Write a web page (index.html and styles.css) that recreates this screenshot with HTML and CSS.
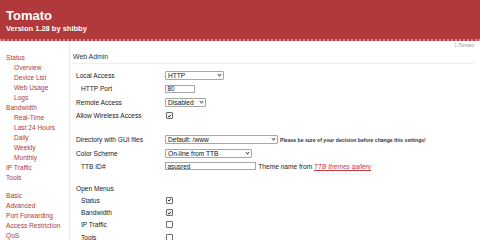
FILE: index.html
```html
<!DOCTYPE html>
<html>
<head>
<meta charset="utf-8">
<link rel="stylesheet" href="styles.css">
</head>
<body>
<header class="hdr">
  <div class="title">Tomato</div>
  <div class="version">Version 1.28 by shibby</div>
</header>
<div class="main">
  <nav class="side">
    <a class="top">Status</a>
    <a class="sub">Overview</a>
    <a class="sub">Device List</a>
    <a class="sub">Web Usage</a>
    <a class="sub">Logs</a>
    <a class="top">Bandwidth</a>
    <a class="sub">Real-Time</a>
    <a class="sub">Last 24 Hours</a>
    <a class="sub">Daily</a>
    <a class="sub">Weekly</a>
    <a class="sub">Monthly</a>
    <a class="top">IP Traffic</a>
    <a class="top">Tools</a>
    <a class="top gap">Basic</a>
    <a class="top">Advanced</a>
    <a class="top">Port Forwarding</a>
    <a class="top">Access Restriction</a>
    <a class="top">QoS</a>
  </nav>
  <section class="content">
    <div class="ident">1.Tomato</div>
    <div class="section-title">Web Admin</div>
    <div class="fields">
      <div class="row"><span class="lbl">Local Access</span><span class="sel w-http"><span>HTTP</span><i class="chev"></i></span></div>
      <div class="row"><span class="lbl sub">HTTP Port</span><span class="inp w-port">80</span></div>
      <div class="row"><span class="lbl">Remote Access</span><span class="sel w-dis"><span>Disabled</span><i class="chev"></i></span></div>
      <div class="row"><span class="lbl">Allow Wireless Access</span><span class="cb"><svg viewBox="0 0 6 6" width="6" height="6"><path d="M1.3 3.1 L2.5 4.4 L4.8 1.4" fill="none" stroke="#111" stroke-width="1.1"/></svg></span></div>
      <div class="spacer s1"></div>
      <div class="row"><span class="lbl">Directory with GUI files</span><span class="sel w-dir"><span>Default: /www</span><i class="chev"></i></span><span class="note">Please be sure of your decision before change this settings!</span></div>
      <div class="row"><span class="lbl">Color Scheme</span><span class="sel w-col"><span>On-line from TTB</span><i class="chev"></i></span></div>
      <div class="row"><span class="lbl sub">TTB ID#</span><span class="inp w-ttb">asusred</span><span class="after">Theme name from <a class="link">TTB themes gallery</a></span></div>
      <div class="spacer s2"></div>
      <div class="row sm"><span class="lbl">Open Menus</span></div>
      <div class="row sm"><span class="lbl sub">Status</span><span class="cb"><svg viewBox="0 0 6 6" width="6" height="6"><path d="M1.3 3.1 L2.5 4.4 L4.8 1.4" fill="none" stroke="#111" stroke-width="1.1"/></svg></span></div>
      <div class="row sm"><span class="lbl sub">Bandwidth</span><span class="cb"><svg viewBox="0 0 6 6" width="6" height="6"><path d="M1.3 3.1 L2.5 4.4 L4.8 1.4" fill="none" stroke="#111" stroke-width="1.1"/></svg></span></div>
      <div class="row sm"><span class="lbl sub">IP Traffic</span><span class="cb"></span></div>
      <div class="row sm"><span class="lbl sub">Tools</span><span class="cb"></span></div>
    </div>
  </section>
</div>
</body>
</html>
```
FILE: styles.css
```css
* { box-sizing: border-box; }
html, body { margin: 0; padding: 0; background: #fff; }
body {
  font-family: "Liberation Sans", Arial, sans-serif;
  color: #222;
  width: 480px;
  height: 240px;
  overflow: hidden;
}
.hdr {
  height: 41px;
  background: #b2393b;
  border-bottom: 2px dotted #d98a8b;
  padding: 9px 0 0 6px;
  color: #fff;
}
.title {
  font-size: 13px;
  font-weight: bold;
  line-height: 13px;
}
.version {
  margin-top: 1.9px;
  font-size: 7.5px;
  font-weight: bold;
  line-height: 9px;
}
.main {
  display: flex;
  height: 199px;
}
.side {
  width: 70px;
  flex: none;
  border-right: 1px solid #e6e6e6;
  padding-top: 11.7px;
  display: flex;
  flex-direction: column;
}
.side a {
  display: block;
  font-size: 6.6px;
  line-height: 10px;
  color: #b2393b;
  white-space: nowrap;
}
.side a.top { padding-left: 6px; }
.side a.sub { padding-left: 14px; }
.side a.gap { margin-top: 8.3px; }
.content {
  flex: 1;
  padding-left: 3px;
  padding-right: 6px;
}
.ident {
  margin-top: 2px;
  text-align: right;
  font-size: 4.8px;
  line-height: 6px;
  color: #999;
}
.section-title {
  margin-top: 3px;
  font-size: 6.9px;
  line-height: 9px;
  color: #333;
  padding-bottom: 2px;
  border-bottom: 1px solid #eee;
}
.fields {
  padding-left: 3px;
  margin-top: 5px;
}
.row {
  display: flex;
  align-items: center;
  height: 13.3px;
  font-size: 6.6px;
  white-space: nowrap;
}
.row.sm { height: 12.3px; }
.lbl {
  width: 89px;
  flex: none;
  color: #222;
}
.lbl.sub { padding-left: 5px; }
.spacer.s1 { height: 11px; }
.spacer.s2 { height: 8.85px; }
.sel {
  display: inline-flex;
  align-items: center;
  justify-content: space-between;
  height: 9px;
  border: 1px solid #a6a6a6;
  border-radius: 1px;
  padding: 0 2.5px 0 2px;
  font-size: 6.6px;
  color: #111;
  background: #fff;
}
.chev {
  width: 3px;
  height: 3px;
  border-right: 0.8px solid #555;
  border-bottom: 0.8px solid #555;
  transform: rotate(45deg);
  margin-top: -2px;
}
.w-http { width: 59px; }
.w-dis { width: 41px; }
.w-dir { width: 113px; }
.w-col { width: 87px; }
.inp {
  display: inline-flex;
  align-items: center;
  height: 8px;
  border: 1px solid #a6a6a6;
  padding-left: 1.5px;
  font-size: 6.4px;
  color: #111;
}
.w-port { width: 30px; }
.w-ttb { width: 91px; }
.cb {
  display: inline-flex;
  width: 7px;
  height: 7px;
  margin-left: 0.5px;
  border: 0.8px solid #6b6b6b;
  border-radius: 1px;
  background: #fff;
  align-items: center;
  justify-content: center;
}
.cb svg { display: block; }
.note {
  margin-left: 2px;
  font-size: 5.1px;
  font-weight: bold;
  color: #333;
}
.after {
  margin-left: 2.3px;
  font-size: 6.6px;
  color: #222;
}
.link {
  color: #c0393b;
  font-style: italic;
  text-decoration: underline;
}
```
